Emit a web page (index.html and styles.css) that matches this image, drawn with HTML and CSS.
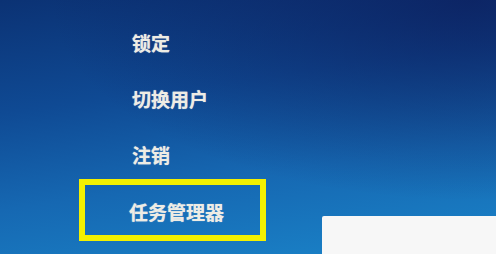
FILE: index.html
```html
<!DOCTYPE html>
<html>
<head lang="zh">
    <meta charset="UTF-8">
    <title>任务管理器</title>
    <link rel="stylesheet" href="styles.css">
</head>
<body>

<div id="screen">
    <ul class="menu">
        <li class="item">锁定</li>
        <li class="item">切换用户</li>
        <li class="item">注销</li>
        <li class="item selected">任务管理器</li>
    </ul>
    <div class="patch"></div>
</div>

</body>
</html>
```

FILE: styles.css
```css
html, body{
    margin: 0;
    padding: 0;
}
#screen{
    width: 496px;
    height: 254px;
    position: relative;
    overflow: hidden;
    background:
        radial-gradient(ellipse 420px 200px at 470px 0, rgba(12, 28, 90, 0.75), rgba(12, 28, 90, 0) 100%),
        linear-gradient(172deg, #0b3274 0%, #0f4a94 35%, #1668b2 65%, #1a84c9 100%);
    font-family: "Noto Sans CJK SC", "Noto Sans", sans-serif;
}
.menu{
    list-style: none;
    margin: 0;
    padding: 15px 0 0 79px;
}
.item{
    height: 56px;
    line-height: 56px;
    padding-left: 53px;
    font-size: 19px;
    font-weight: bold;
    color: #eeece4;
    text-shadow: 0 0 1px rgba(255, 255, 255, 0.7);
    letter-spacing: 0;
}
.item.selected{
    width: 131px;
    height: 50px;
    line-height: 54px;
    margin-top: -4px;
    padding-left: 44px;
    border: 6px solid #f3f000;
}
.patch{
    position: absolute;
    left: 322px;
    top: 216px;
    width: 174px;
    height: 38px;
    background: #f7f7f7;
    border-top-left-radius: 2px;
}
```
